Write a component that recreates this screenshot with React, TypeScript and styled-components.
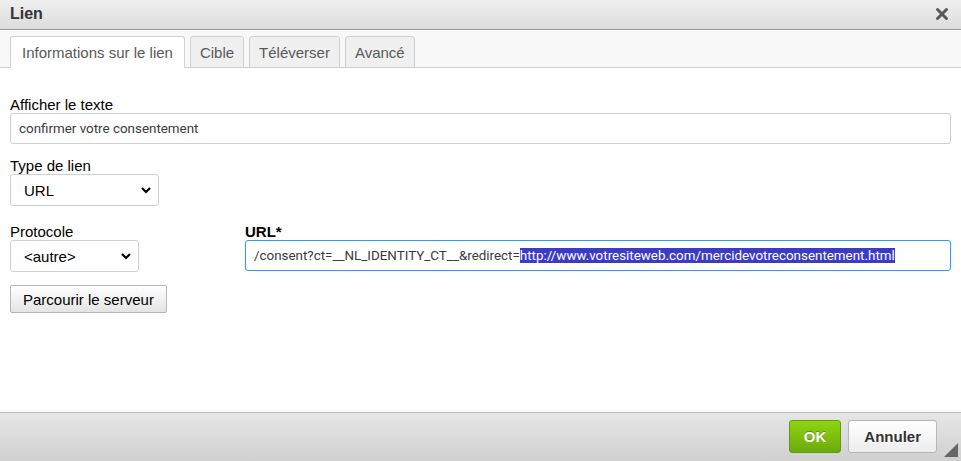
import * as React from 'react';
import styled, { createGlobalStyle } from 'styled-components';

const GlobalStyle = createGlobalStyle`
  html, body { margin: 0; padding: 0; background: #fff; overflow: hidden; }
  * { box-sizing: border-box; }
`;

const Dialog = styled.div`
  width: 961px;
  height: 461px;
  display: flex;
  flex-direction: column;
  background: #fff;
  font-family: 'Liberation Sans', Arial, sans-serif;
  color: #000;
`;

const TitleBar = styled.div`
  height: 30px;
  flex: none;
  display: flex;
  align-items: center;
  justify-content: space-between;
  padding: 0 11px 1px 10px;
  border-bottom: 1px solid #9a9a9a;
  background: linear-gradient(#efefef, #dcdcdc);
  font-size: 16px;
  font-weight: bold;
  color: #333;
`;

const CloseBtn = styled.span`
  display: flex;
  width: 16px;
  height: 16px;
  align-items: center;
  justify-content: center;
`;

const TabBar = styled.div`
  height: 38px;
  flex: none;
  display: flex;
  align-items: flex-end;
  gap: 5px;
  padding: 0 10px;
  background: #f8f8f8;
  border-bottom: 1px solid #d1d1d1;
`;

const Tab = styled.div<{ $active?: boolean }>`
  height: 32px;
  margin-bottom: -1px;
  display: flex;
  align-items: center;
  padding: 0 ${p => (p.$active ? '11px' : '9px')};
  font-size: 15px;
  color: #595959;
  border: 1px solid #d1d1d1;
  border-bottom-color: ${p => (p.$active ? '#fff' : '#d1d1d1')};
  border-radius: 3px 3px 0 0;
  background: ${p => (p.$active ? '#fff' : '#f0f0f0')};
`;

const Content = styled.div`
  flex: 1;
  padding: 28px 10px 0;
`;

const Field = styled.div<{ $gap?: number }>`
  margin-top: ${p => p.$gap ?? 0}px;
`;

const Label = styled.label<{ $bold?: boolean }>`
  display: block;
  font-size: 15px;
  line-height: 17px;
  font-weight: ${p => (p.$bold ? 'bold' : 'normal')};
`;

const TextInput = styled.div<{ $focus?: boolean }>`
  height: 31px;
  width: 100%;
  display: flex;
  align-items: center;
  padding: 0 8px;
  border: 1px solid ${p => (p.$focus ? '#2a9df2' : '#cdd0d3')};
  border-radius: 3px;
  font-family: Roboto, 'Liberation Sans', sans-serif;
  font-size: 13.4px;
  color: #3a3a3a;
  white-space: nowrap;
  overflow: hidden;
`;

const Selected = styled.span`
  background: #3d3bc6;
  color: #fff;
`;

const SelectBox = styled.div<{ $w: number }>`
  position: relative;
  width: ${p => p.$w}px;
  height: 32px;
  display: flex;
  align-items: center;
  padding: 0 13px;
  border: 1px solid #cdd0d3;
  border-radius: 3px;
  background: #fff;
  font-size: 15px;
`;

const Chevron = styled.svg`
  position: absolute;
  right: 7px;
  top: 12px;
`;

const Row = styled.div`
  display: flex;
  margin-top: 17px;
`;

const Col = styled.div<{ $w?: number }>`
  width: ${p => (p.$w ? `${p.$w}px` : 'auto')};
  flex: ${p => (p.$w ? 'none' : 1)};
`;

const Button = styled.button`
  margin-top: 13px;
  height: 28px;
  padding: 0 12px;
  border: 1px solid #b6b6b6;
  border-radius: 2px;
  background: linear-gradient(#ffffff, #e4e4e4);
  font-family: 'Liberation Sans', Arial, sans-serif;
  font-size: 15px;
  color: #000;
`;

const Footer = styled.div`
  position: relative;
  height: 49px;
  flex: none;
  display: flex;
  justify-content: flex-end;
  align-items: flex-start;
  gap: 7px;
  padding: 7px 24px 0 0;
  border-top: 1px solid #bcbcbc;
  background: linear-gradient(#e6e6e6, #d0d0d0);
`;

const FooterBtn = styled.button<{ $ok?: boolean }>`
  height: 33px;
  padding: 0 ${p => (p.$ok ? '14px' : '15px')};
  border-radius: 3px;
  border: 1px solid ${p => (p.$ok ? '#5e9c16' : '#b6b6b6')};
  background: ${p =>
    p.$ok ? 'linear-gradient(#8fd411, #6caa0d)' : 'linear-gradient(#ffffff, #ececec)'};
  color: ${p => (p.$ok ? '#fff' : '#333')};
  font-family: 'Liberation Sans', Arial, sans-serif;
  font-size: 15px;
  font-weight: bold;
  text-shadow: ${p => (p.$ok ? '0 -1px 0 #5a8f12' : '0 1px 0 #fff')};
`;

const Grip = styled.svg`
  position: absolute;
  right: 3px;
  bottom: 4px;
`;

const ChevronIcon = () => (
  <Chevron width="10" height="7" viewBox="0 0 10 7">
    <polyline points="1,1 5,5 9,1" fill="none" stroke="#000" strokeWidth="2.2" />
  </Chevron>
);

export default function App() {
  const tabs = ['Informations sur le lien', 'Cible', 'Téléverser', 'Avancé'];
  return (
    <>
      <GlobalStyle />
      <Dialog>
        <TitleBar>
          Lien
          <CloseBtn>
            <svg width="14" height="14" viewBox="0 0 14 14">
              <path d="M2.5 2.5 L11.5 11.5 M11.5 2.5 L2.5 11.5" stroke="#585858" strokeWidth="3" strokeLinecap="round" />
            </svg>
          </CloseBtn>
        </TitleBar>
        <TabBar>
          {tabs.map((t, i) => (
            <Tab key={t} $active={i === 0}>{t}</Tab>
          ))}
        </TabBar>
        <Content>
          <Field>
            <Label>Afficher le texte</Label>
            <TextInput>confirmer votre consentement</TextInput>
          </Field>
          <Field $gap={13}>
            <Label>Type de lien</Label>
            <SelectBox $w={149}>
              URL
              <ChevronIcon />
            </SelectBox>
          </Field>
          <Row>
            <Col $w={235}>
              <Label>Protocole</Label>
              <SelectBox $w={129}>
                &lt;autre&gt;
                <ChevronIcon />
              </SelectBox>
            </Col>
            <Col>
              <Label $bold>URL*</Label>
              <TextInput $focus>
                /consent?ct=__NL_IDENTITY_CT__&amp;redirect=
                <Selected>http://www.votresiteweb.com/mercidevotreconsentement.html</Selected>
              </TextInput>
            </Col>
          </Row>
          <Button>Parcourir le serveur</Button>
        </Content>
        <Footer>
          <FooterBtn $ok>OK</FooterBtn>
          <FooterBtn>Annuler</FooterBtn>
          <Grip width="14" height="14" viewBox="0 0 14 14">
            <polygon points="14,0 14,14 0,14" fill="#666" />
          </Grip>
        </Footer>
      </Dialog>
    </>
  );
}
